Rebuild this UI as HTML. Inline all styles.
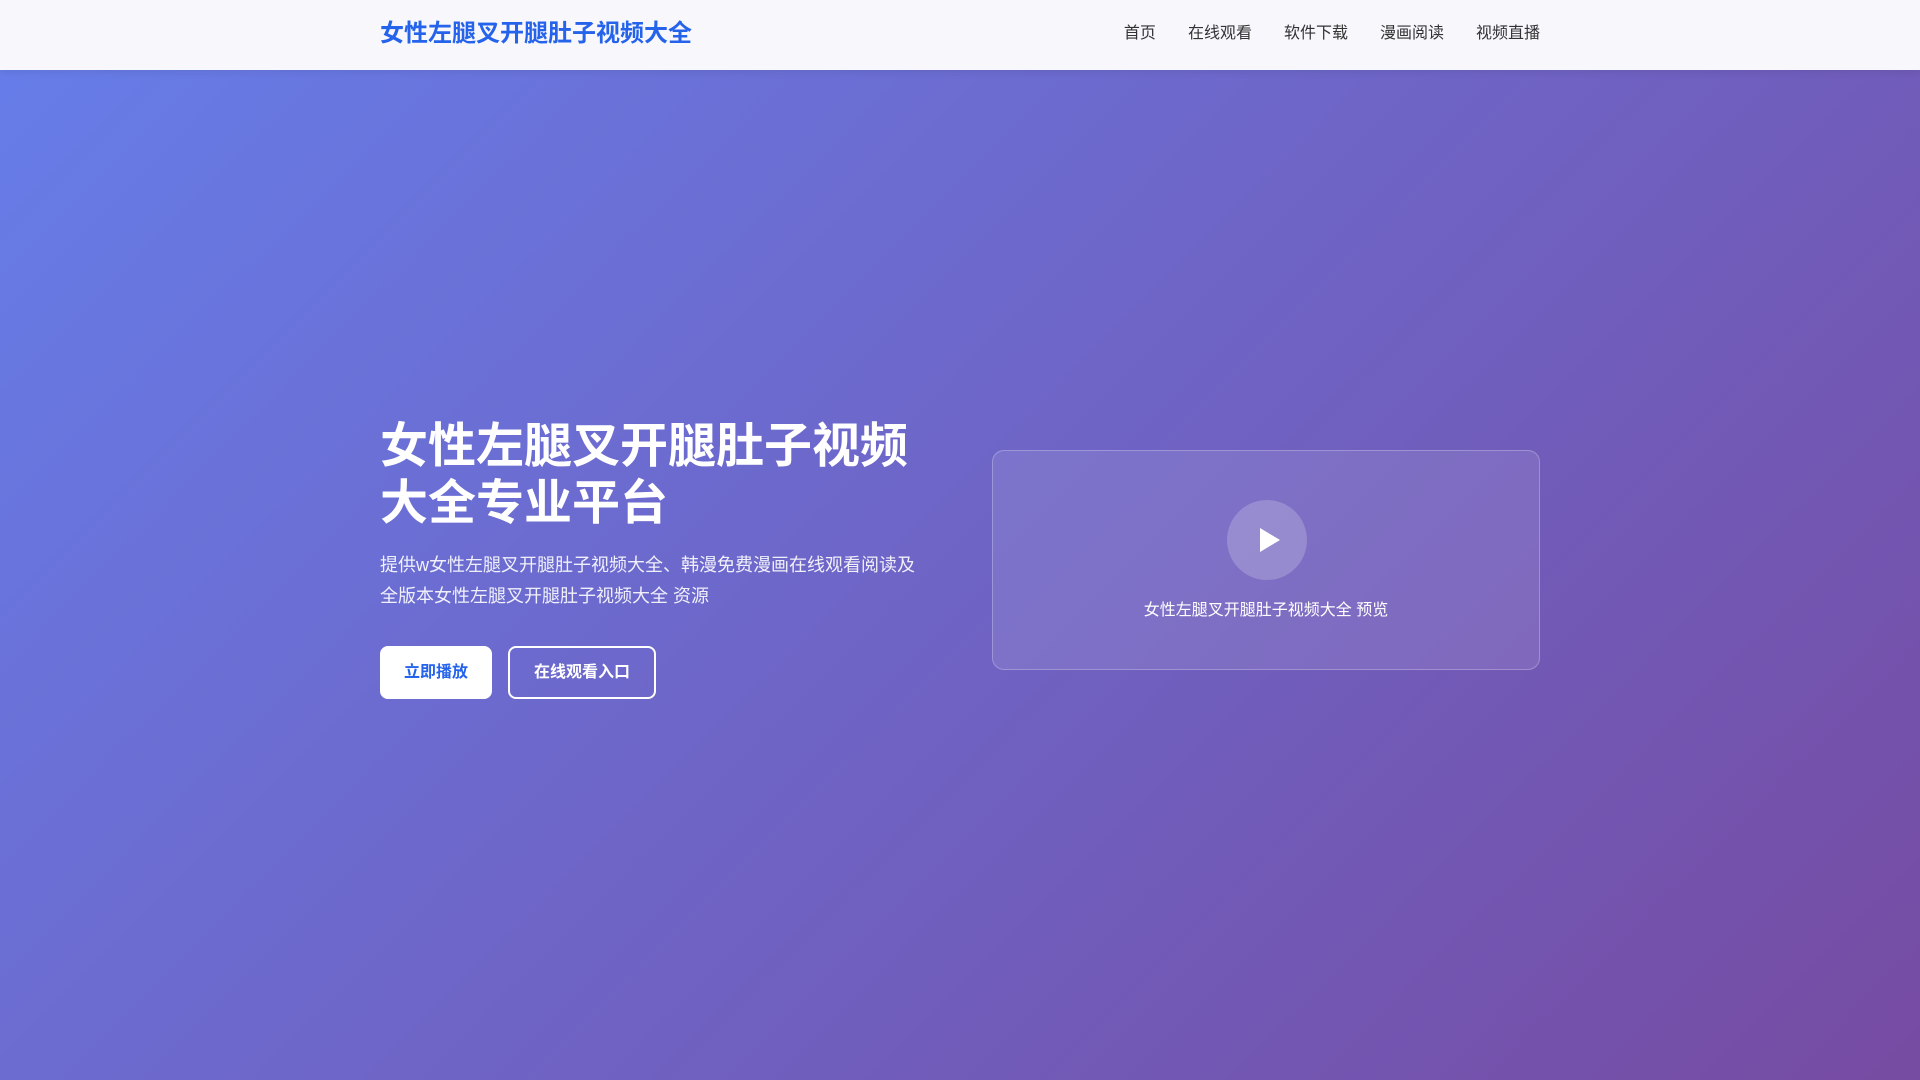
<!DOCTYPE html>
<html><head><meta charset="utf-8"><style>
*{margin:0;padding:0;box-sizing:border-box}
body{width:1920px;height:1080px;overflow:hidden;font-family:"Liberation Sans","Noto Sans CJK SC",sans-serif;background:linear-gradient(135deg,#667eea 0%,#764ba2 100%)}
header{position:absolute;top:0;left:0;width:1920px;height:70px;background:#f7f7fc;box-shadow:0 2px 8px rgba(0,0,0,.08)}
.wrap{position:absolute;left:380px;width:1160px}
.logo{position:absolute;left:380px;top:0;line-height:68px;font-size:24px;font-weight:bold;color:#2563eb}
nav{position:absolute;right:380px;top:0;line-height:68px;font-size:16px;color:#333}
nav a{margin-left:32px;color:#333;text-decoration:none}
h1{position:absolute;left:380px;top:418px;width:560px;font-size:48px;line-height:57px;color:#fff;font-weight:bold}
p.d{position:absolute;left:380px;top:550px;width:540px;font-size:18px;line-height:31px;color:rgba(255,255,255,.9)}
.b1,.b2{position:absolute;top:646px;height:53px;border-radius:8px;font-size:16px;font-weight:bold;text-align:center;line-height:51px}
.b1{left:380px;width:112px;background:#fff;color:#2563eb;border:1px solid #fff}
.b2{left:508px;width:148px;border:2px solid #fff;color:#fff;line-height:49px}
.card{position:absolute;left:992px;top:450px;width:548px;height:220px;border-radius:12px;background:rgba(255,255,255,.1);border:1px solid rgba(255,255,255,.25)}
.play{position:absolute;left:234px;top:49px;width:80px;height:80px;border-radius:50%;background:rgba(255,255,255,.2)}
.play:after{content:"";position:absolute;left:33px;top:28px;border-left:20px solid #fff;border-top:12px solid transparent;border-bottom:12px solid transparent}
.cap{position:absolute;left:0;width:100%;top:145px;text-align:center;color:#fff;font-size:16px}
</style></head><body>
<header><div class="logo">女性左腿叉开腿肚子视频大全</div>
<nav><a>首页</a><a>在线观看</a><a>软件下载</a><a>漫画阅读</a><a>视频直播</a></nav></header>
<h1>女性左腿叉开腿肚子视频大全专业平台</h1>
<p class="d">提供w女性左腿叉开腿肚子视频大全、韩漫免费漫画在线观看阅读及全版本女性左腿叉开腿肚子视频大全 资源</p>
<div class="b1">立即播放</div><div class="b2">在线观看入口</div>
<div class="card"><div class="play"></div><div class="cap">女性左腿叉开腿肚子视频大全 预览</div></div>
</body></html>
